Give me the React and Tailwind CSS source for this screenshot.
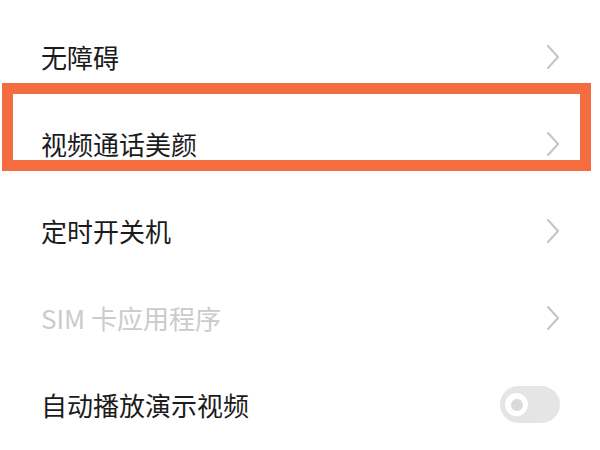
import React from 'react'

function Chevron() {
  return (
    <svg width="14" height="26" viewBox="0 0 14 26" fill="none" className="shrink-0">
      <path d="M2 2 L12 13 L2 24" stroke="#c4c4c4" strokeWidth="2" strokeLinecap="round" strokeLinejoin="round" />
    </svg>
  )
}

function Toggle() {
  return (
    <div className="w-[60px] h-[37px] rounded-full bg-[#e5e5e5] flex items-center pl-[5px]">
      <div className="w-[23px] h-[23px] rounded-full bg-white flex items-center justify-center">
        <div className="w-[12px] h-[12px] rounded-full bg-[#dadada]" />
      </div>
    </div>
  )
}

const rows = [
  { label: '无障碍', type: 'link' },
  { label: '视频通话美颜', type: 'link' },
  { label: '定时开关机', type: 'link' },
  { label: 'SIM 卡应用程序', type: 'link', disabled: true },
  { label: '自动播放演示视频', type: 'toggle' },
]

export default function App() {
  return (
    <div
      className="relative w-[600px] h-[450px] bg-white overflow-hidden pt-[13px]"
      style={{ fontFamily: '"Noto Sans CJK SC", "Noto Sans", sans-serif' }}
    >
      {rows.map((row) => (
        <div key={row.label} className="h-[87px] flex items-center justify-between pl-[41px] pr-[40px]">
          <span className={`text-[26px] leading-none ${row.disabled ? 'text-[#cbcbcb]' : 'text-[#1b1b1b]'}`}>
            {row.label}
          </span>
          {row.type === 'toggle' ? <Toggle /> : <Chevron />}
        </div>
      ))}

      {/* highlight box */}
      <div className="absolute left-[2px] top-[83px] w-[589px] h-[88px] border-[11px] border-[#f46c40]" />
    </div>
  )
}
